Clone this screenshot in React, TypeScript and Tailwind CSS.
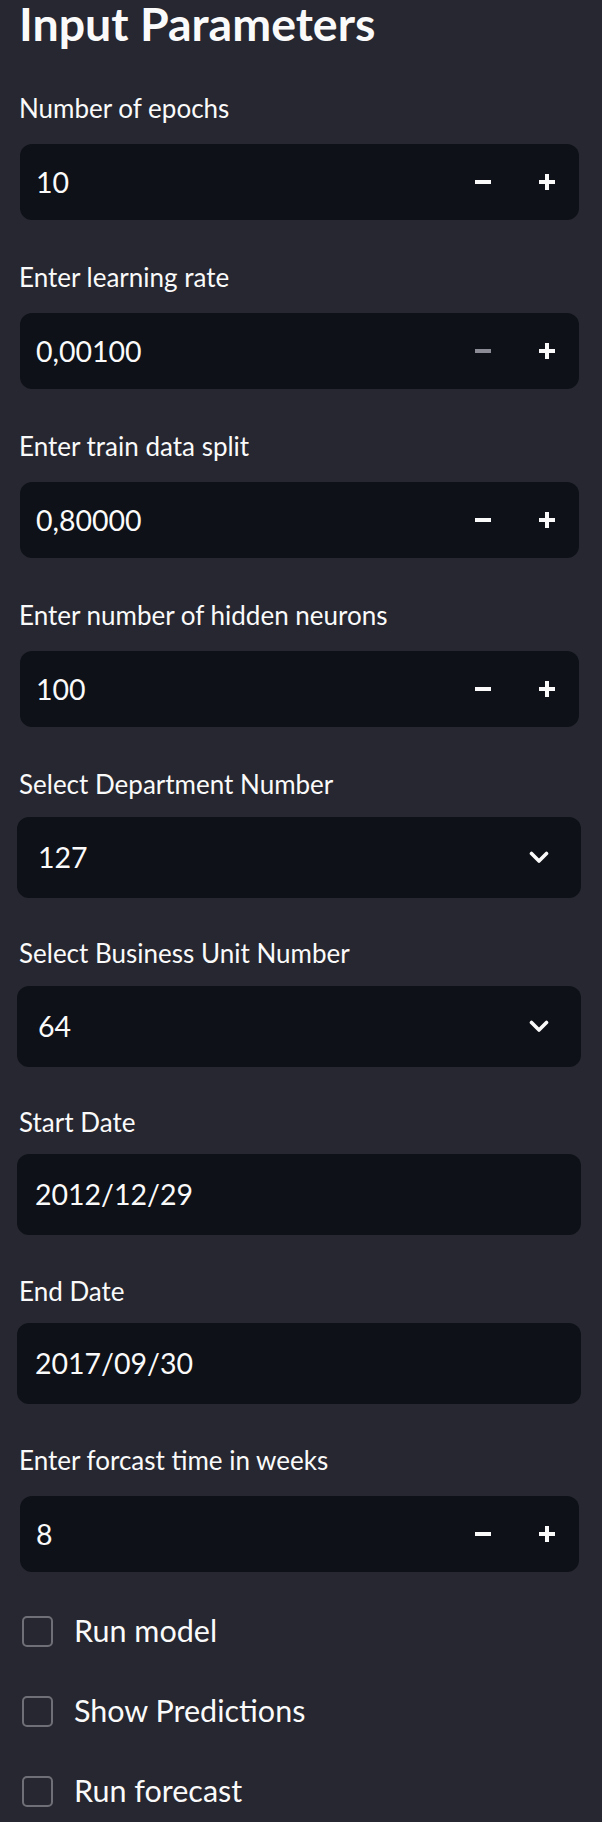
import React from "react";

// ── Small drawings ───────────────────────────────────────────────────────────
const Minus = ({ dim = false }: { dim?: boolean }) => (
  <div className={`w-[16px] h-[4px] ${dim ? "bg-[#8a8b94]" : "bg-[#fafafa]"}`} />
);

const Plus = () => (
  <div className="relative w-[16px] h-[16px]">
    <div className="absolute left-0 top-[6px] w-[16px] h-[4px] bg-[#fafafa]" />
    <div className="absolute top-0 left-[6px] w-[4px] h-[16px] bg-[#fafafa]" />
  </div>
);

const Chevron = () => (
  <svg width="20" height="13" viewBox="0 0 20 13" fill="none">
    <path d="M2.5 2.5 L10 10 L17.5 2.5" stroke="#fafafa" strokeWidth="3.6" strokeLinecap="round" strokeLinejoin="round" />
  </svg>
);

// ── Widgets ──────────────────────────────────────────────────────────────────
const Label = ({ text }: { text: string }) => (
  <div className="ml-[2px] h-[32px] leading-[30px] text-[26px] text-[#fafafa]">{text}</div>
);

const Stepper = ({ value, minusDisabled = false }: { value: string; minusDisabled?: boolean }) => (
  <div className="mt-[19px] ml-[3px] w-[559px] h-[76px] rounded-[12px] bg-[#0e1117] flex items-center">
    <span className="flex-1 pl-[16px] text-[28.5px] text-[#fafafa]">{value}</span>
    <div className="w-[64px] h-full flex items-center justify-center">
      <Minus dim={minusDisabled} />
    </div>
    <div className="w-[64px] h-full flex items-center justify-center">
      <Plus />
    </div>
  </div>
);

const NumberField = ({ label, value, minusDisabled = false, last = false }: { label: string; value: string; minusDisabled?: boolean; last?: boolean }) => (
  <div className={last ? "pb-[19px]" : "pb-[42px]"}>
    <Label text={label} />
    <Stepper value={value} minusDisabled={minusDisabled} />
  </div>
);

const SelectField = ({ label, value }: { label: string; value: string }) => (
  <div className="pb-[40px]">
    <Label text={label} />
    <div className="mt-[16px] w-[564px] h-[81px] rounded-[12px] bg-[#0e1117] flex items-center justify-between pl-[21px] pr-[32px]">
      <span className="text-[28.5px] text-[#fafafa]">{value}</span>
      <Chevron />
    </div>
  </div>
);

const DateField = ({ label, value }: { label: string; value: string }) => (
  <div className="pb-[41px]">
    <Label text={label} />
    <div className="mt-[15px] w-[564px] h-[81px] rounded-[12px] bg-[#0e1117] flex items-center pl-[18px]">
      <span className="text-[28.5px] text-[#fafafa]">{value}</span>
    </div>
  </div>
);

const Check = ({ label }: { label: string }) => (
  <div className="h-[80px] flex items-center">
    <div className="ml-[5px] w-[31px] h-[31px] rounded-[5px] border-2 border-[#6f7077]" />
    <span className="ml-[21px] text-[30.5px] text-[#fafafa]">{label}</span>
  </div>
);

// ── Page ─────────────────────────────────────────────────────────────────────
export default function App() {
  return (
    <div
      className="w-[602px] h-[1822px] overflow-hidden bg-[#262730] pl-[17px]"
      style={{ fontFamily: "Lato, 'Noto Sans', sans-serif" }}
    >
      <h1 className="ml-[2px] h-[47px] leading-[47px] text-[46.5px] font-bold text-[#fafafa]">
        Input Parameters
      </h1>
      <div className="mt-[46px] flex flex-col">
        <NumberField label="Number of epochs" value="10" />
        <NumberField label="Enter learning rate" value="0,00100" minusDisabled />
        <NumberField label="Enter train data split" value="0,80000" />
        <NumberField label="Enter number of hidden neurons" value="100" />
        <SelectField label="Select Department Number" value="127" />
        <SelectField label="Select Business Unit Number" value="64" />
        <DateField label="Start Date" value="2012/12/29" />
        <DateField label="End Date" value="2017/09/30" />
        <NumberField label="Enter forcast time in weeks" value="8" last />
        <Check label="Run model" />
        <Check label="Show Predictions" />
        <Check label="Run forecast" />
      </div>
    </div>
  );
}
